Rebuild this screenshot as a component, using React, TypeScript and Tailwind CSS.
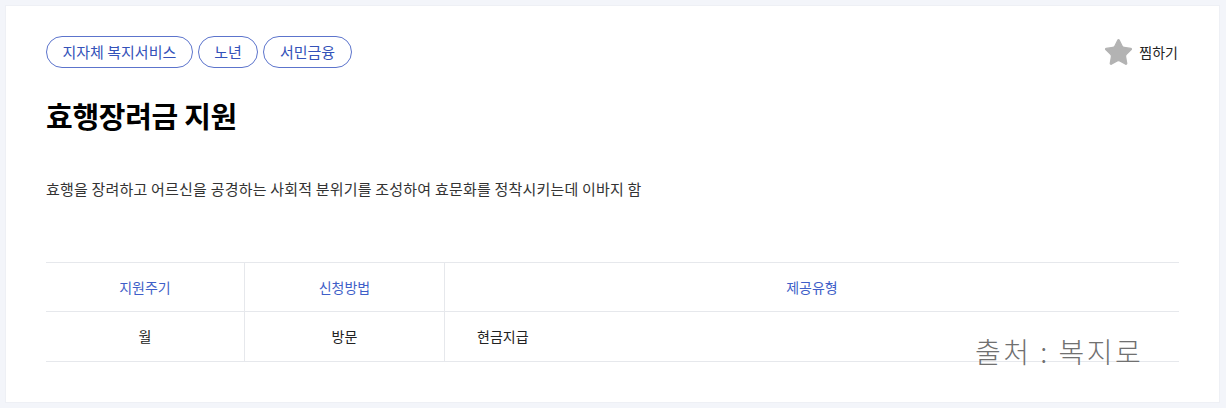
import { Star } from "lucide-react";

const tags = ["지자체 복지서비스", "노년", "서민금융"];

export default function App() {
  return (
    <div
      className="w-[1226px] h-[408px] bg-[#f3f5fa] p-[5px] pr-[6px]"
      style={{ fontFamily: '"Noto Sans CJK KR", "Noto Sans", sans-serif' }}
    >
      <div className="relative h-[398px] bg-white border border-[#eef0f5] pl-[40px] pr-[40px] pt-[30px]">
        <div className="flex items-start justify-between">
          <div className="flex gap-[5px]">
            {tags.map((t) => (
              <span
                key={t}
                className="h-[32px] px-[15.5px] flex items-center rounded-full border border-[#5c74cc] text-[15px] text-[#3452b9]"
              >
                {t}
              </span>
            ))}
          </div>
          <div className="flex items-center gap-[5px] mt-[1px] mr-[1px]">
            <Star size={31} fill="#b3b3b3" stroke="#b3b3b3" strokeWidth={1} />
            <span className="text-[14px] text-[#222]">찜하기</span>
          </div>
        </div>

        <h1 className="mt-[26px] text-[29px] leading-[42px] font-bold text-black tracking-[-0.3px]">
          효행장려금 지원
        </h1>

        <p className="mt-[43px] text-[15px] leading-[20px] text-[#333] tracking-[0.2px]">
          효행을 장려하고 어르신을 공경하는 사회적 분위기를 조성하여 효문화를 정착시키는데 이바지 함
        </p>

        <div className="mt-[63px] border-t border-b border-[#e6e8ec]">
          <div className="grid grid-cols-[199px_200px_1fr] h-[49px] border-b border-[#e6e8ec] text-[14px] text-[#3f5fc8]">
            <div className="flex items-center justify-center border-r border-[#e6e8ec]">지원주기</div>
            <div className="flex items-center justify-center border-r border-[#e6e8ec]">신청방법</div>
            <div className="flex items-center justify-center">제공유형</div>
          </div>
          <div className="grid grid-cols-[199px_200px_1fr] h-[49px] text-[14px] text-[#222]">
            <div className="flex items-center justify-center border-r border-[#e6e8ec]">월</div>
            <div className="flex items-center justify-center border-r border-[#e6e8ec]">방문</div>
            <div className="flex items-center pl-[32px]">현금지급</div>
          </div>
        </div>

        <div className="absolute left-[969px] top-[324px] text-[28px] font-extralight text-[#707070] tracking-[2.5px]">
          출처 : 복지로
        </div>
      </div>
    </div>
  );
}
